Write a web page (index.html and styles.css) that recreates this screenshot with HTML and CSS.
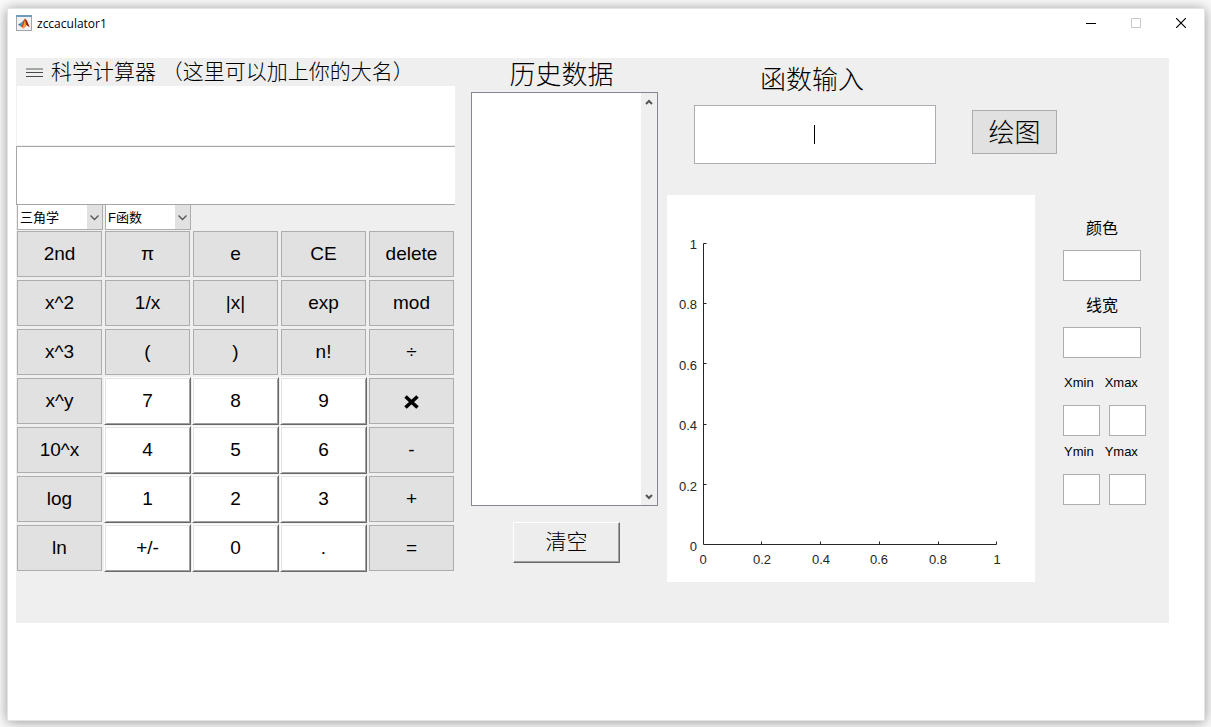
FILE: index.html
```html
<!DOCTYPE html>
<html lang="zh-CN">
<head>
<meta charset="utf-8">
<meta name="viewport" content="width=device-width, initial-scale=1">
<title>zccaculator1</title>
<link rel="stylesheet" href="styles.css">
</head>
<body>
<div class="window">
  <header class="titlebar">
    <svg class="app-icon" viewBox="0 0 16 16" aria-hidden="true">
      <rect x="0.5" y="0.5" width="15" height="15" fill="#f1f1f1" stroke="#a3a6a8"/>
      <rect x="0" y="0" width="16" height="2" fill="#6f9dbd"/>
      <path d="M2 9.5 5 8l1.8-1.4L9 3.6 7.8 9 5 11.6z" fill="#2f6f9f"/>
      <path d="M5 8l1.800-1.400L8 9l-3 2.600L3.500 10.300z" fill="#4b9ac4"/>
      <path d="M9 3.500 6.500 8.500 5 11.600l2 2 2-1.500 1.500-2L13.500 12 11 6z" fill="#cf4520"/>
      <path d="M9 5 7.500 10l-1.500 3 2 .3 2-3z" fill="#f2a33a"/>
      <path d="M9.200 3.600 11 6.200l2.500 5.800-3-1.900z" fill="#8e2413"/>
    </svg>
    <h1 class="window-title">zccaculator1</h1>
    <div class="window-actions">
      <button class="window-button" type="button" aria-label="最小化"><svg viewBox="0 0 10 10"><path d="M0 5.500h10" stroke="#000"/></svg></button>
      <button class="window-button" type="button" aria-label="最大化" disabled><svg viewBox="0 0 10 10"><path d="M.5.5h9v9h-9z" fill="none" stroke="#c8c8c8"/></svg></button>
      <button class="window-button" type="button" aria-label="关闭"><svg viewBox="0 0 10 10"><path d="M0 0l10 10M10 0L0 10" stroke="#000" stroke-width="1.200"/></svg></button>
    </div>
  </header>

  <main class="panel">
    <section class="calculator">
      <h2 class="calc-title">
        <svg class="menu-icon" viewBox="0 0 17 9" aria-hidden="true"><path d="M0 1h17" stroke="#a3a8a3" stroke-width="2"/><path d="M0 4.500h17M0 8.500h17" stroke="#4a4a4a"/></svg>
        <span>科学计算器 （这里可以加上你的大名）</span>
      </h2>
      <input class="display display-expression" type="text" aria-label="表达式">
      <input class="display display-result" type="text" aria-label="结果">
      <div class="menus">
        <div class="menu">
          <select class="menu-select" aria-label="三角学"><option>三角学</option></select>
          <svg class="menu-arrow" viewBox="0 0 15 24" aria-hidden="true"><path d="M3.500 10.500l4 4 4-4" fill="none" stroke="#555" stroke-width="1.300"/></svg>
        </div>
        <div class="menu">
          <select class="menu-select" aria-label="F函数"><option>F函数</option></select>
          <svg class="menu-arrow" viewBox="0 0 15 24" aria-hidden="true"><path d="M3.500 10.500l4 4 4-4" fill="none" stroke="#555" stroke-width="1.300"/></svg>
        </div>
      </div>
      <div class="keys">
        <button class="key" type="button">2nd</button>
        <button class="key" type="button">π</button>
        <button class="key" type="button">e</button>
        <button class="key" type="button">CE</button>
        <button class="key" type="button">delete</button>
        <button class="key" type="button">x^2</button>
        <button class="key" type="button">1/x</button>
        <button class="key" type="button">|x|</button>
        <button class="key" type="button">exp</button>
        <button class="key" type="button">mod</button>
        <button class="key" type="button">x^3</button>
        <button class="key" type="button">(</button>
        <button class="key" type="button">)</button>
        <button class="key" type="button">n!</button>
        <button class="key" type="button">÷</button>
        <button class="key" type="button">x^y</button>
        <button class="key key-number" type="button">7</button>
        <button class="key key-number" type="button">8</button>
        <button class="key key-number" type="button">9</button>
        <button class="key" type="button" aria-label="乘"><svg class="times" viewBox="0 0 15 14" aria-hidden="true"><path d="M1.500 1.500l12 11M13.500 1.500l-12 11" stroke="#000" stroke-width="3.600"/></svg></button>
        <button class="key" type="button">10^x</button>
        <button class="key key-number" type="button">4</button>
        <button class="key key-number" type="button">5</button>
        <button class="key key-number" type="button">6</button>
        <button class="key" type="button">-</button>
        <button class="key" type="button">log</button>
        <button class="key key-number" type="button">1</button>
        <button class="key key-number" type="button">2</button>
        <button class="key key-number" type="button">3</button>
        <button class="key" type="button">+</button>
        <button class="key" type="button">ln</button>
        <button class="key key-number" type="button">+/-</button>
        <button class="key key-number" type="button">0</button>
        <button class="key key-number" type="button">.</button>
        <button class="key" type="button">=</button>
      </div>
    </section>

    <section class="history">
      <h2 class="heading" id="history-heading">历史数据</h2>
      <div class="history-box">
        <select class="history-list" size="2" aria-labelledby="history-heading"></select>
        <div class="scrollbar">
          <button class="scroll-button" type="button" aria-label="向上滚动"><svg viewBox="0 0 8 6"><path d="M1 5l3-3 3 3" fill="none" stroke="#555" stroke-width="2"/></svg></button>
          <button class="scroll-button" type="button" aria-label="向下滚动"><svg viewBox="0 0 8 6"><path d="M1 1l3 3 3-3" fill="none" stroke="#555" stroke-width="2"/></svg></button>
        </div>
      </div>
      <button class="clear-button" type="button">清空</button>
    </section>

    <section class="graph">
      <div class="function-bar">
        <div class="function-field">
          <label class="heading" for="function-input">函数输入</label>
          <div class="function-box">
            <input class="field function-input" id="function-input" type="text">
            <span class="caret" aria-hidden="true"></span>
          </div>
        </div>
        <button class="plot-button" type="button">绘图</button>
      </div>
      <div class="graph-body">
        <svg class="plot" viewBox="0 0 368 387" role="img" aria-label="坐标轴">
          <path class="axis" d="M39.500 48.500h-3v301h293v-3M36.500 108.500h3M36.500 168.500h3M36.500 229.500h3M36.500 289.500h3M94.500 349.500v-3M153.500 349.500v-3M212.500 349.500v-3M271.500 349.500v-3"/>
          <g class="tick-y">
            <text x="30" y="54">1</text>
            <text x="30" y="114">0.8</text>
            <text x="30" y="175">0.6</text>
            <text x="30" y="235">0.4</text>
            <text x="30" y="296">0.2</text>
            <text x="30" y="356">0</text>
          </g>
          <g class="tick-x">
            <text x="36" y="369">0</text>
            <text x="95" y="369">0.2</text>
            <text x="154" y="369">0.4</text>
            <text x="212" y="369">0.6</text>
            <text x="271" y="369">0.8</text>
            <text x="330" y="369">1</text>
          </g>
        </svg>
        <div class="settings">
          <label class="setting">颜色<input class="field" type="text"></label>
          <label class="setting">线宽<input class="field" type="text"></label>
          <div class="limits">
            <div class="limit-labels"><label for="xmin">Xmin</label><label for="xmax">Xmax</label></div>
            <div class="limit-fields"><input class="field" id="xmin" type="text"><input class="field" id="xmax" type="text"></div>
            <div class="limit-labels"><label for="ymin">Ymin</label><label for="ymax">Ymax</label></div>
            <div class="limit-fields"><input class="field" id="ymin" type="text"><input class="field" id="ymax" type="text"></div>
          </div>
        </div>
      </div>
    </section>
  </main>
</div>
</body>
</html>
```
FILE: styles.css
```css
* {
  box-sizing: border-box;
}

body {
  margin: 0;
  padding: 8px 6px 6px 7px;
  background: #fafafa;
  color: #000;
  font-family: "Liberation Sans", "Noto Sans CJK SC", sans-serif;
}

button,
input,
select {
  margin: 0;
  padding: 0;
  border-radius: 0;
  color: inherit;
  font: inherit;
}

h1,
h2 {
  margin: 0;
  font-weight: 300;
}

.window {
  min-height: calc(100vh - 14px);
  border: 1px solid #e4e4e4;
  background: #fff;
  box-shadow: 0 1px 12px rgba(0, 0, 0, 0.4);
}

.titlebar {
  display: flex;
  align-items: flex-start;
  height: 49px;
  padding: 6px 1px 0 8px;
}

.app-icon {
  width: 16px;
  height: 16px;
}

.window-title {
  margin-left: 5px;
  font: 400 12px/18px "Open Sans", "Noto Sans", sans-serif;
}

.window-actions {
  display: flex;
  margin-left: auto;
}

.window-button {
  display: flex;
  align-items: center;
  justify-content: center;
  width: 45px;
  height: 16px;
  border: 0;
  background: none;
}

.window-button svg {
  width: 10px;
  height: 10px;
}

.panel {
  display: grid;
  grid-template-columns: 439fr 212fr 502fr;
  margin: 0 35px 0 8px;
  padding-bottom: 41px;
  background: #efefef;
}

.calculator {
  display: flex;
  flex-direction: column;
}

.calc-title {
  display: flex;
  align-items: center;
  gap: 8px;
  height: 28px;
  padding-left: 10px;
  font-size: 21px;
  line-height: 28px;
  white-space: nowrap;
}

.menu-icon {
  flex: none;
  width: 17px;
  height: 9px;
}

.display {
  width: 100%;
  height: 59px;
  border: solid #a5a5aa;
  border-width: 1px 0 1px 1px;
  background: #fff;
  font-size: 21px;
}

.display-expression {
  height: 60px;
  border-color: #efefef;
  border-top: 0;
}

.menus {
  display: flex;
  gap: 2px;
  padding-left: 1px;
}

.menu {
  display: grid;
  width: 86px;
  height: 25px;
}

.menu-select,
.menu-arrow {
  grid-area: 1 / 1;
}

.menu-select {
  width: 100%;
  padding: 0 16px 0 2px;
  appearance: none;
  border: 1px solid #adadad;
  border-top: 0;
  background: #fff;
  font-size: 13px;
}

.menu-arrow {
  justify-self: end;
  width: 15px;
  height: 24px;
  margin-right: 1px;
  background: #e1e1e1;
  pointer-events: none;
}

.keys {
  display: grid;
  grid-template-columns: repeat(5, 1fr);
  grid-auto-rows: 46px;
  gap: 3px;
  padding: 1px 1px 0;
}

.key,
.plot-button {
  border: 1px solid #adadad;
  background: #e1e1e1;
}

.key {
  font-size: 19px;
  line-height: 22px;
}

.key-number,
.clear-button {
  border-color: #fff #696969 #696969 #fff;
}

.key-number {
  margin: -1px;
  background: #fff;
  box-shadow: inset 1px 1px #e3e3e3, inset -1px -1px #a0a0a0;
}

.times {
  width: 15px;
  height: 14px;
  vertical-align: middle;
}

.heading {
  padding-right: 6px;
  font-size: 26px;
  font-weight: 300;
  line-height: 34px;
  text-align: center;
}

.history {
  display: flex;
  flex-direction: column;
  align-items: center;
  padding: 0 9px 0 16px;
}

.history-box {
  display: flex;
  width: 100%;
  height: 414px;
  border: 1px solid #828790;
  background: #fff;
}

.history-list {
  flex: 1;
  min-width: 0;
  border: 0;
  outline: 0;
  background: #fff;
}

.scrollbar {
  display: flex;
  flex-direction: column;
  justify-content: space-between;
  width: 16px;
  background: #efefef;
}

.scroll-button {
  display: flex;
  align-items: center;
  justify-content: center;
  height: 17px;
  border: 0;
  background: none;
}

.scroll-button svg {
  width: 8px;
  height: 6px;
}

.clear-button {
  width: 107px;
  height: 41px;
  margin: 16px 0 0 4px;
  padding-bottom: 6px;
  border-width: 1px;
  border-style: solid;
  background: #ededed;
  box-shadow: inset -1px -1px #a0a0a0;
  font-size: 21px;
  font-weight: 300;
}

.graph {
  display: flex;
  flex-direction: column;
}

.function-bar {
  display: flex;
  align-items: flex-start;
  gap: 36px;
  height: 137px;
  padding: 5px 0 0 27px;
}

.function-field {
  display: flex;
  flex-direction: column;
  width: 242px;
}

.function-field .heading {
  padding-bottom: 8px;
}

.function-box {
  position: relative;
  height: 59px;
}

.field {
  width: 100%;
  height: 31px;
  border: 1px solid #abadb3;
  background: #fff;
}

.function-input {
  height: 59px;
  font-size: 21px;
  text-align: center;
}

.caret {
  position: absolute;
  top: 20px;
  left: calc(50% - 1px);
  width: 1px;
  height: 19px;
  background: #000;
}

.plot-button {
  width: 85px;
  height: 44px;
  margin-top: 47px;
  padding-bottom: 4px;
  font-size: 26px;
  font-weight: 300;
}

.graph-body {
  display: grid;
  grid-template-columns: 368fr 134fr;
  align-items: start;
}

.plot {
  width: 100%;
  background: #fff;
}

.axis {
  fill: none;
  stroke: #262626;
}

.plot text {
  fill: #262626;
  font-size: 13px;
}

.tick-y {
  text-anchor: end;
}

.tick-x {
  text-anchor: middle;
}

.settings {
  display: flex;
  flex-direction: column;
  gap: 11px;
  padding: 20px 22px 0 28px;
}

.setting {
  display: flex;
  flex-direction: column;
  gap: 7px;
  width: 78px;
  font-size: 16px;
  line-height: 28px;
  text-align: center;
}

.limits {
  display: flex;
  flex-direction: column;
  padding-top: 6px;
}

.limit-labels {
  display: flex;
  gap: 11px;
  padding-left: 1px;
  font-size: 13px;
  line-height: 16px;
}

.limit-fields {
  display: grid;
  grid-template-columns: 37px 37px;
  gap: 9px;
  padding: 14px 0 8px;
}
```
